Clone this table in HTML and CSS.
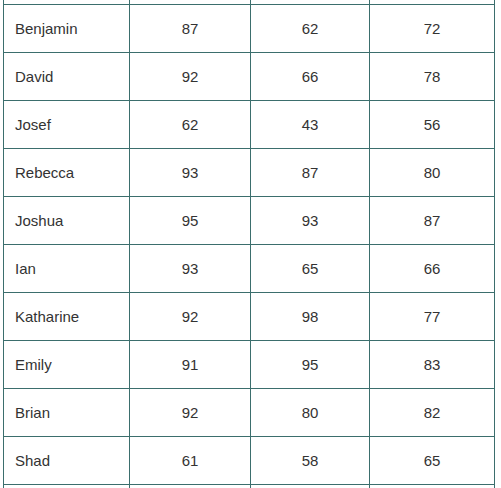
FILE: index.html
```html
<!DOCTYPE html>
<html>
<head>
<meta charset="utf-8">
<link rel="stylesheet" href="styles.css">
</head>
<body>
<table class="grades">
  <colgroup>
    <col class="c-name"><col class="c-a"><col class="c-b"><col class="c-c">
  </colgroup>
  <tbody>
    <tr class="cut"><td></td><td></td><td></td><td></td></tr>
    <tr><td>Benjamin</td><td>87</td><td>62</td><td>72</td></tr>
    <tr><td>David</td><td>92</td><td>66</td><td>78</td></tr>
    <tr><td>Josef</td><td>62</td><td>43</td><td>56</td></tr>
    <tr><td>Rebecca</td><td>93</td><td>87</td><td>80</td></tr>
    <tr><td>Joshua</td><td>95</td><td>93</td><td>87</td></tr>
    <tr><td>Ian</td><td>93</td><td>65</td><td>66</td></tr>
    <tr><td>Katharine</td><td>92</td><td>98</td><td>77</td></tr>
    <tr><td>Emily</td><td>91</td><td>95</td><td>83</td></tr>
    <tr><td>Brian</td><td>92</td><td>80</td><td>82</td></tr>
    <tr><td>Shad</td><td>61</td><td>58</td><td>65</td></tr>
    <tr class="cut"><td></td><td></td><td></td><td></td></tr>
  </tbody>
</table>
</body>
</html>
```
FILE: styles.css
```css
html, body {
  margin: 0;
  padding: 0;
  background: #ffffff;
}
body {
  font-family: "Liberation Sans", Arial, sans-serif;
  font-size: 15px;
  color: #333333;
}
.grades {
  border-collapse: collapse;
  table-layout: fixed;
  width: 491px;
  margin: 0 0 0 3px;
}
.c-name { width: 126px; }
.c-a { width: 121px; }
.c-b { width: 119px; }
.c-c { width: 125px; }
.grades td {
  border: 1px solid #3b6e6d;
  height: 48px;
  padding: 0 11px;
  box-sizing: border-box;
  text-align: center;
  vertical-align: middle;
}
.grades td:first-child {
  text-align: left;
}
.grades tr.cut td {
  height: 4px;
  padding: 0;
  line-height: 0;
  font-size: 0;
}
.grades tr.cut:first-child td {
  border-top: none;
}
.grades tr.cut:last-child td {
  border-bottom: none;
}
```
